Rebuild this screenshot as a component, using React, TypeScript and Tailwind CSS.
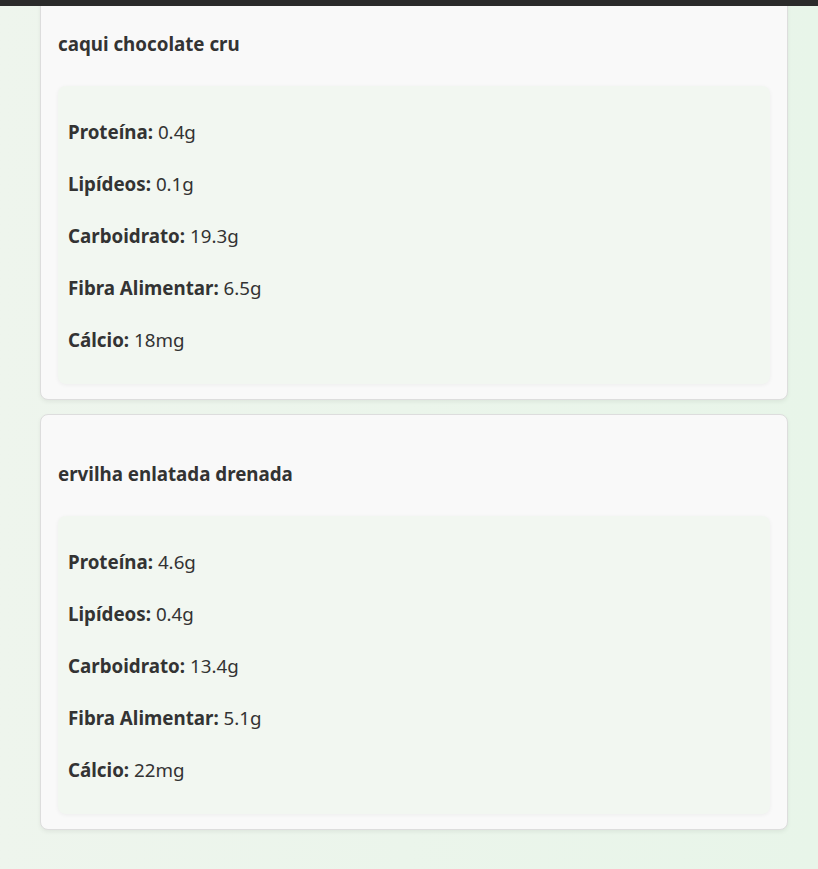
import React from "react";

type Food = {
  name: string;
  nutrients: { label: string; value: string }[];
};

const foods: Food[] = [
  {
    name: "caqui chocolate cru",
    nutrients: [
      { label: "Proteína", value: "0.4g" },
      { label: "Lipídeos", value: "0.1g" },
      { label: "Carboidrato", value: "19.3g" },
      { label: "Fibra Alimentar", value: "6.5g" },
      { label: "Cálcio", value: "18mg" },
    ],
  },
  {
    name: "ervilha enlatada drenada",
    nutrients: [
      { label: "Proteína", value: "4.6g" },
      { label: "Lipídeos", value: "0.4g" },
      { label: "Carboidrato", value: "13.4g" },
      { label: "Fibra Alimentar", value: "5.1g" },
      { label: "Cálcio", value: "22mg" },
    ],
  },
];

function FoodCard({ food, first }: { food: Food; first?: boolean }) {
  return (
    <div
      className={`rounded-lg border border-[#dddddd] bg-[#f9f9f9] px-[17px] pt-[45px] pb-[15px] shadow-[0_2px_4px_rgba(0,0,0,0.06)] ${
        first ? "-mt-[22px]" : ""
      }`}
    >
      <h3 className="text-[18.75px] font-bold leading-[27px] text-[#333333]">{food.name}</h3>
      <div className="mt-[29px] flex flex-col gap-[25px] rounded-lg bg-[#f2f7f1] px-[10px] pt-[32px] pb-[31px] shadow-[0_1px_4px_rgba(0,0,0,0.05)]">
        {food.nutrients.map((n) => (
          <p key={n.label} className="text-[18.75px] leading-[27px] text-[#333333]">
            <strong className="font-bold">{n.label}:</strong> {n.value}
          </p>
        ))}
      </div>
    </div>
  );
}

export default function App() {
  return (
    <div
      className="flex h-[869px] flex-col overflow-hidden bg-gradient-to-r from-[#eef5ed] to-[#e8f5e9]"
      style={{ fontFamily: '"Noto Sans", "Open Sans", sans-serif' }}
    >
      <div className="h-[6px] shrink-0 bg-[#2b2b2b]" />
      <div className="flex-1 overflow-hidden">
        <div className="mx-[40px] flex w-[748px] flex-col gap-[14px]">
          {foods.map((f, i) => (
            <FoodCard key={f.name} food={f} first={i === 0} />
          ))}
        </div>
      </div>
    </div>
  );
}
